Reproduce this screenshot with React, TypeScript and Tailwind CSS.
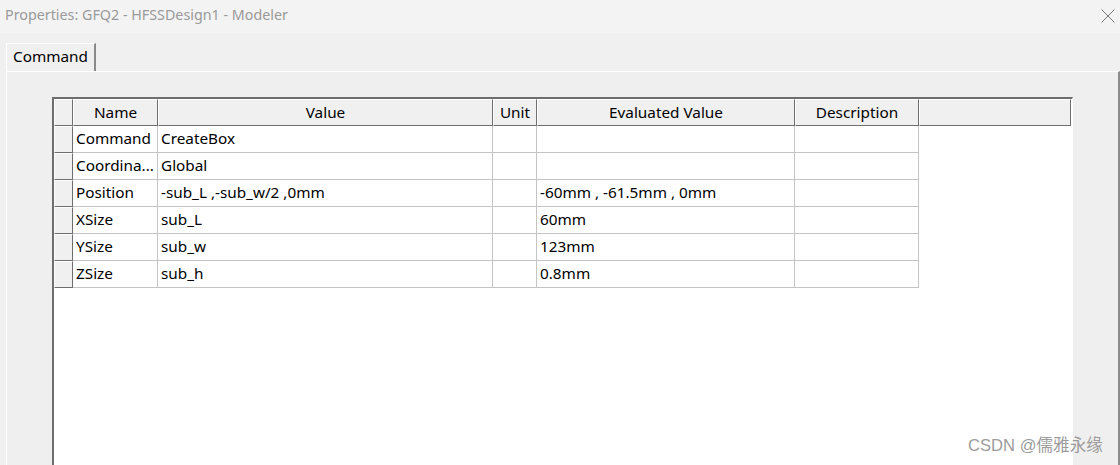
import React from "react";

const cols = [
  { label: "Name", w: "w-[85px]" },
  { label: "Value", w: "w-[335px]" },
  { label: "Unit", w: "w-[44px]" },
  { label: "Evaluated Value", w: "w-[258px]" },
  { label: "Description", w: "w-[124px]" },
];

const rows: string[][] = [
  ["Command", "CreateBox", "", "", ""],
  ["Coordina...", "Global", "", "", ""],
  ["Position", "-sub_L ,-sub_w/2 ,0mm", "", "-60mm , -61.5mm , 0mm", ""],
  ["XSize", "sub_L", "", "60mm", ""],
  ["YSize", "sub_w", "", "123mm", ""],
  ["ZSize", "sub_h", "", "0.8mm", ""],
];

export default function App() {
  return (
    <div
      className="relative w-[1120px] h-[465px] overflow-hidden bg-[#f0f0f0] text-[15.3px] text-black"
      style={{ fontFamily: '"Noto Sans", "Open Sans", sans-serif' }}
    >
      {/* title bar */}
      <div className="h-[33px] bg-[#f3f3f3] flex items-center justify-between pl-[5px] pr-[5px] pb-[3px]">
        <span className="text-[#9a9a9a] text-[14.3px] leading-none">Properties: GFQ2 - HFSSDesign1 - Modeler</span>
        <svg width="14" height="14" viewBox="0 0 14 14" className="mt-[1px]">
          <path d="M0.5 0.5 L13.5 13.5 M13.5 0.5 L0.5 13.5" stroke="#7a7a7a" strokeWidth="1" fill="none" />
        </svg>
      </div>
      {/* tab strip */}
      <div className="pt-[10px] pl-[6px] flex">
        <div className="h-[28px] w-[90px] border-l border-t border-white border-r-2 border-r-[#8a8a8a] bg-[#f0f0f0] flex items-center pl-[6px] pb-[2px]">
          Command
        </div>
      </div>
      {/* panel */}
      <div className="ml-[6px] w-[1114px] h-[400px] border-l border-t border-white border-r-2 border-r-[#8c8c8c] bg-[#efefef] pt-[25px] pl-[45px]">
        <div className="w-[1021px] h-[380px] border-l-2 border-t-2 border-[#6e6e6e] border-r border-r-white bg-white">
          {/* header */}
          <div className="flex h-[27px]">
            <div className="w-[19px] h-full bg-[#f0f0f0] border-l border-t border-white border-r border-b border-r-[#6e6e6e] border-b-[#6e6e6e]" />
            {cols.map((c) => (
              <div
                key={c.label}
                className={`${c.w} h-full bg-[#f0f0f0] border-l border-t border-white border-r border-b border-r-[#6e6e6e] border-b-[#6e6e6e] flex items-center justify-center leading-none`}
              >
                {c.label}
              </div>
            ))}
            <div className="w-[152px] h-full bg-[#f0f0f0] border-l border-t border-white border-r border-b border-r-[#6e6e6e] border-b-[#6e6e6e]" />
          </div>
          {/* rows */}
          {rows.map((r, i) => (
            <div key={i} className="flex h-[27px]">
              <div className="w-[19px] h-full bg-[#f0f0f0] border-l border-t border-white border-r border-b border-r-[#6e6e6e] border-b-[#6e6e6e]" />
              {r.map((v, j) => (
                <div
                  key={j}
                  className={`${cols[j].w} h-full border-r border-b border-[#c4c4c4] flex items-center pl-[3px] whitespace-nowrap overflow-hidden leading-none`}
                >
                  {v}
                </div>
              ))}
            </div>
          ))}
        </div>
      </div>
      {/* watermark */}
      <div
        className="absolute left-[968px] top-[438px] text-[16.6px] text-[#9c9c9c] leading-none"
        style={{ fontFamily: '"Liberation Sans", "Noto Sans CJK SC", sans-serif' }}
      >
        CSDN @儒雅永缘
      </div>
    </div>
  );
}
